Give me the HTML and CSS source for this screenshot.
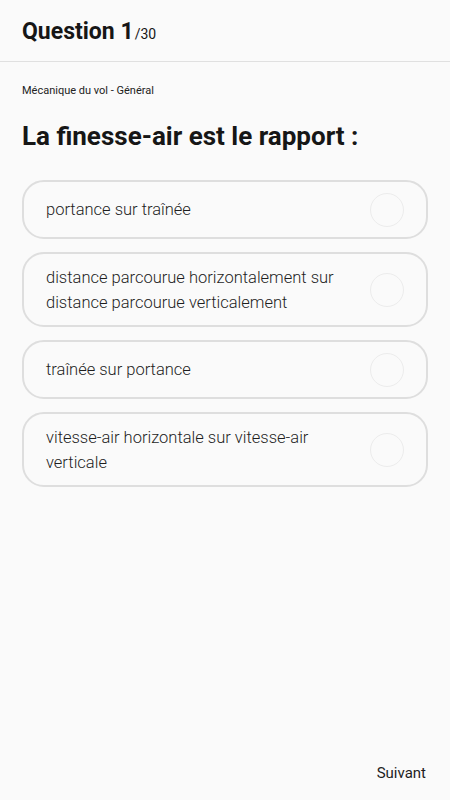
FILE: index.html
```html
<!DOCTYPE html>
<html lang="fr">
<head>
    <meta charset="UTF-8">
    <meta name="viewport" content="width=device-width, initial-scale=1.0">
    <title>Question 1/30</title>
    <link rel="stylesheet" href="styles.css">
</head>
<body>
    <header class="top-bar">
        <h1 class="q-count">Question 1<span class="q-total">/30</span></h1>
    </header>

    <main class="quiz">
        <p class="category">Mécanique du vol - Général</p>
        <h2 class="question">La finesse-air est le rapport :</h2>

        <ul class="answers">
            <li class="answer">
                <span class="answer-text">portance sur traînée</span>
                <span class="radio"></span>
            </li>
            <li class="answer">
                <span class="answer-text">distance parcourue horizontalement sur distance parcourue verticalement</span>
                <span class="radio"></span>
            </li>
            <li class="answer">
                <span class="answer-text">traînée sur portance</span>
                <span class="radio"></span>
            </li>
            <li class="answer">
                <span class="answer-text">vitesse-air horizontale sur vitesse-air verticale</span>
                <span class="radio"></span>
            </li>
        </ul>
    </main>

    <footer class="bottom-bar">
        <button class="next-btn" type="button">Suivant</button>
    </footer>
</body>
</html>
```

FILE: styles.css
```css
body {
    font-family: 'Roboto', 'Liberation Sans', sans-serif;
    background-color: #fafafa;
    color: #1b1b1b;
    margin: 0;
    padding: 0;
    display: flex;
    flex-direction: column;
    min-height: 100vh;
}

.top-bar {
    height: 62px;
    border-bottom: 1px solid #e0e0e0;
    padding: 2px 22px 0;
    display: flex;
    align-items: center;
    box-sizing: border-box;
}

.q-count {
    margin: 0;
    font-size: 23px;
    font-weight: 700;
    color: #161616;
}

.q-total {
    font-size: 14px;
    font-weight: 400;
    margin-left: 1px;
}

.quiz {
    flex: 1;
    padding: 0 22px;
}

.category {
    margin: 22px 0 0;
    font-size: 11px;
    color: #222;
}

.question {
    margin: 24px 0 29px;
    font-size: 26px;
    font-weight: 700;
    color: #161616;
}

.answers {
    list-style: none;
    margin: 0;
    padding: 0;
    display: flex;
    flex-direction: column;
    gap: 13px;
}

.answer {
    display: flex;
    align-items: center;
    justify-content: space-between;
    gap: 20px;
    padding: 10.5px 22px;
    border: 2px solid #dedede;
    border-radius: 22px;
    background: #fafafa;
}

.answer-text {
    font-size: 16.5px;
    font-weight: 300;
    line-height: 25px;
    color: #1e1e1e;
}

.radio {
    flex: none;
    width: 32px;
    height: 32px;
    border: 1px solid #ececec;
    border-radius: 50%;
}

.bottom-bar {
    display: flex;
    justify-content: flex-end;
    padding: 0 14px 10px;
}

.next-btn {
    background: none;
    border: none;
    font-family: inherit;
    font-size: 15px;
    color: #1e1e1e;
    padding: 8px 10px;
    cursor: pointer;
}
```
